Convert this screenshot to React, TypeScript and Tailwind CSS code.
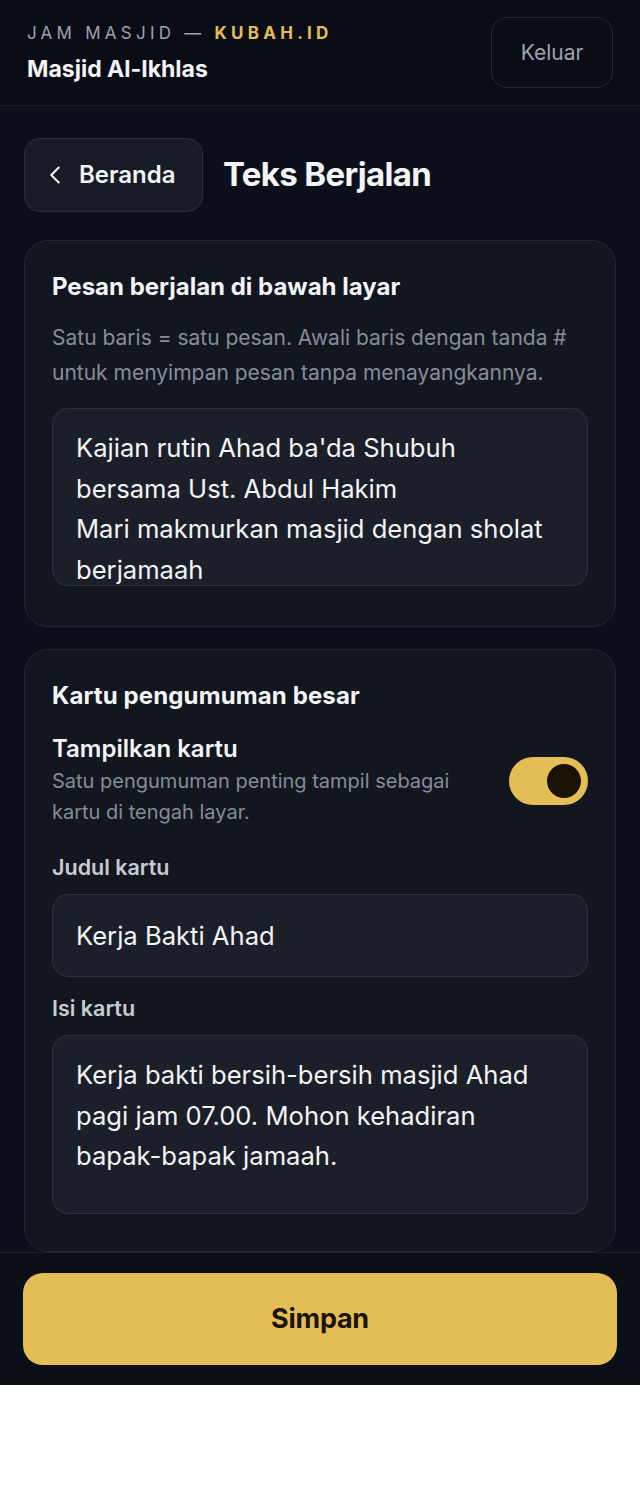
import { ChevronLeft } from "lucide-react";

const Card = ({ children }: { children: React.ReactNode }) => (
  <div className="rounded-[24px] border border-[#222733] bg-[#12161f] px-[27px] pt-[32px]">
    {children}
  </div>
);

export default function App() {
  return (
    <div className="w-[640px] bg-[#0b0f19] font-['Inter',sans-serif] text-[#f3f4f6]">
      <header className="flex items-center justify-between border-b border-[#1a1f29] bg-[#0a0d15] px-[27px] py-[17px]">
        <div>
          <div className="text-[17px] leading-[22px] tracking-[0.25em] text-[#9ca3af]">
            JAM MASJID —{" "}
            <span className="font-bold text-[#e5bd57]">KUBAH.ID</span>
          </div>
          <div className="mt-[11px] text-[23px] font-bold leading-[28px]">
            Masjid Al-Ikhlas
          </div>
        </div>
        <button className="h-[71px] w-[122px] rounded-[16px] border border-[#222733] text-[21px] text-[#9ca3af]">
          Keluar
        </button>
      </header>

      <main className="px-[24px] pt-[32px]">
        <div className="flex items-center gap-[20px]">
          <button className="flex h-[74px] w-[179px] items-center gap-[9px] rounded-[16px] border border-[#2a2f3b] bg-[#171b25] pl-[15px] text-[24px] font-semibold">
            <ChevronLeft size={30} strokeWidth={1.6} />
            Beranda
          </button>
          <h1 className="text-[33px] font-bold tracking-[-0.02em]">Teks Berjalan</h1>
        </div>

        <div className="mt-[28px] flex flex-col gap-[22px]">
          <Card>
            <h2 className="text-[24px] font-bold leading-[28px]">
              Pesan berjalan di bawah layar
            </h2>
            <p className="mt-[19px] text-[21px] leading-[35px] text-[#868c98]">
              Satu baris = satu pesan. Awali baris dengan tanda # untuk menyimpan pesan tanpa menayangkannya.
            </p>
            <textarea
              className="mt-[18px] block h-[178px] w-full resize-none overflow-hidden rounded-[16px] border border-[#2c313c] bg-[#1b1f29] pl-[23px] pr-[34px] py-[19px] text-[25.6px] leading-[40.5px] text-[#f3f4f6] outline-none"
              defaultValue={"Kajian rutin Ahad ba'da Shubuh\nbersama Ust. Abdul Hakim\nMari makmurkan masjid dengan sholat berjamaah"}
            />
            <div className="h-[40px]" />
          </Card>

          <Card>
            <h2 className="text-[24px] font-bold leading-[28px] tracking-[0.005em]">
              Kartu pengumuman besar
            </h2>
            <div className="mt-[24px] flex items-center justify-between gap-[40px]">
              <div>
                <div className="text-[24px] font-semibold leading-[30px]">
                  Tampilkan kartu
                </div>
                <p className="mt-[2px] text-[20px] leading-[31px] text-[#868c98]">
                  Satu pengumuman penting tampil sebagai kartu di tengah layar.
                </p>
              </div>
              <div className="flex h-[48px] w-[79px] shrink-0 items-center justify-end rounded-full bg-[#e5bd57] px-[7px]">
                <div className="h-[34px] w-[34px] rounded-full bg-[#1a1205]" />
              </div>
            </div>

            <label className="mt-[26px] block text-[21.5px] font-semibold leading-[26px] text-[#c8cbd1]">
              Judul kartu
            </label>
            <input
              className="mt-[14px] block h-[83px] w-full rounded-[16px] border border-[#2c313c] bg-[#1b1f29] px-[23px] text-[25.6px] text-[#f3f4f6] outline-none"
              defaultValue="Kerja Bakti Ahad"
            />

            <label className="mt-[18px] block text-[21.5px] font-semibold leading-[26px] text-[#c8cbd1]">
              Isi kartu
            </label>
            <textarea
              className="mt-[14px] block h-[179px] w-full resize-none overflow-hidden rounded-[16px] border border-[#2c313c] bg-[#1b1f29] pl-[23px] pr-[34px] py-[19px] text-[25.6px] leading-[40.5px] text-[#f3f4f6] outline-none"
              defaultValue="Kerja bakti bersih-bersih masjid Ahad pagi jam 07.00. Mohon kehadiran bapak-bapak jamaah."
            />
            <div className="h-[37px]" />
          </Card>
        </div>
      </main>

      <div className="border-t border-[#1c212b] bg-[#0b0f18] px-[23px] pb-[20px] pt-[20px]">
        <button className="h-[92px] w-full rounded-[20px] bg-[#e5bd57] text-[27px] font-bold tracking-[-0.01em] text-[#1a1409]">
          Simpan
        </button>
      </div>
    </div>
  );
}
